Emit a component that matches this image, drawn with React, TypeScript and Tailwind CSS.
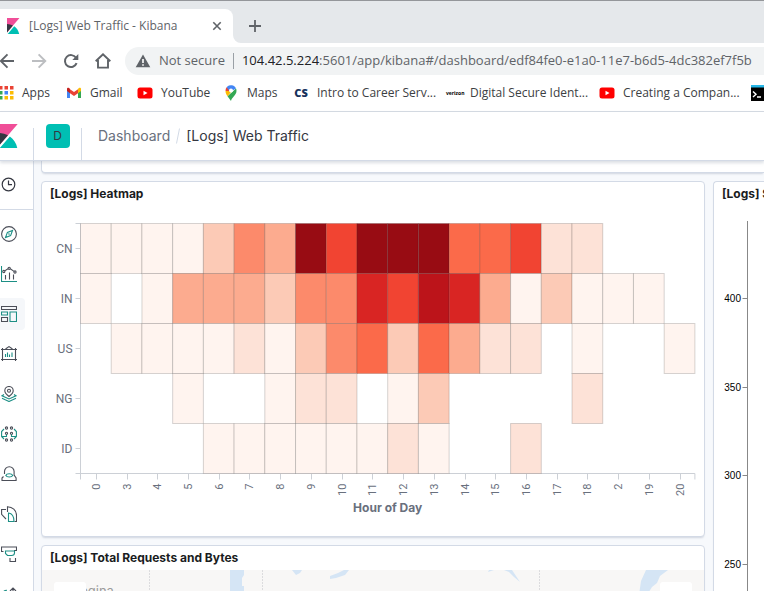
import type { ReactNode } from "react";

const HOURS = ["0", "3", "4", "5", "6", "7", "8", "9", "10", "11", "12", "13", "14", "15", "16", "17", "18", "2", "19", "20"];

// One intensity level per hour; 0 means there were no requests.
const ROWS: { country: string; levels: number[] }[] = [
  { country: "CN", levels: [1, 1, 1, 1, 3, 5, 4, 10, 7, 10, 10, 10, 6, 6, 7, 2, 2, 0, 0, 0] },
  { country: "IN", levels: [1, 0, 1, 4, 4, 4, 3, 5, 5, 8, 7, 9, 8, 4, 1, 3, 1, 1, 1, 0] },
  { country: "US", levels: [0, 1, 1, 1, 1, 2, 1, 3, 5, 6, 3, 6, 4, 2, 2, 0, 1, 0, 0, 1] },
  { country: "NG", levels: [0, 0, 0, 1, 0, 0, 1, 2, 2, 0, 1, 3, 0, 0, 0, 0, 2, 0, 0, 0] },
  { country: "ID", levels: [0, 0, 0, 0, 1, 1, 1, 1, 1, 1, 2, 1, 0, 0, 2, 0, 0, 0, 0, 0] },
];

const REDS = ["none", "#fff4ef", "#fde2d7", "#fccab6", "#fcab8f", "#fc8a6b", "#fb6a4a", "#f14432", "#d92523", "#bc141a", "#980c13"];

function KibanaLogo({ className }: { className: string }) {
  return (
    <svg viewBox="0 0 32 32" className={className} aria-hidden="true">
      <path fill="#F04E98" d="M4 0v28.789L28.935.017z" />
      <path fill="#343741" d="M4 12v16.789l11.906-13.738A24.721 24.721 0 0 0 4 12" />
      <path fill="#00BFB3" d="M18.479 16.664L6.268 30.754l-1.073 1.237h23.191c-1.252-6.292-4.883-11.719-9.907-15.327" />
    </svg>
  );
}

function YouTubeIcon() {
  return (
    <svg viewBox="0 0 16 16" className="size-4 shrink-0" aria-hidden="true">
      <rect x="0.5" y="2.5" width="15" height="11" rx="2.5" fill="#f00" />
      <path d="M6.5 5.7v4.6l4-2.3z" fill="#fff" />
    </svg>
  );
}

function TabStrip() {
  return (
    <div className="flex h-[43px] shrink-0 items-end border-t border-[#94969a] bg-[#e5e8eb]">
      <div className="flex h-[34px] w-[233px] items-center rounded-tr-lg bg-white pr-[10px] pl-[5px] text-xs text-[#5f6368]">
        <KibanaLogo className="size-4 shrink-0" />
        <span className="ml-2 flex-1 whitespace-nowrap">[Logs] Web Traffic - Kibana</span>
        <button aria-label="Close tab" className="flex size-3 items-center justify-center">
          <svg viewBox="0 0 12 12" className="size-3">
            <path d="M2.3 2.3l7.4 7.4M9.7 2.3L2.3 9.7" stroke="#5f6368" strokeWidth="1.6" />
          </svg>
        </button>
      </div>
      <svg viewBox="0 0 8 8" className="size-2" aria-hidden="true">
        <path d="M0 0a8 8 0 0 0 8 8H0z" fill="#fff" />
      </svg>
      <button aria-label="New tab" className="flex h-[34px] w-7 items-center justify-center">
        <svg viewBox="0 0 12 12" className="size-3">
          <path d="M6 0v12M0 6h12" stroke="#5f6368" strokeWidth="1.8" />
        </svg>
      </button>
    </div>
  );
}

function Toolbar() {
  return (
    <div className="flex h-9 shrink-0 items-center overflow-hidden bg-white">
      <div className="-ml-px flex shrink-0 gap-4 pr-[14px]">
        <button aria-label="Back">
          <svg viewBox="0 0 16 16" className="size-4" fill="none" stroke="#5f6368" strokeWidth="1.9">
            <path d="M15 8H2M8.5 1.3L1.8 8l6.7 6.7" />
          </svg>
        </button>
        <button aria-label="Forward">
          <svg viewBox="0 0 16 16" className="size-4" fill="none" stroke="#bcbec1" strokeWidth="1.9">
            <path d="M1 8h13M7.6 1.3L14.3 8l-6.7 6.7" />
          </svg>
        </button>
        <button aria-label="Reload">
          <svg viewBox="0 0 16 16" className="size-4">
            <path d="M13.6 10.2a6 6 0 1 1-.6-5.4" fill="none" stroke="#5f6368" strokeWidth="2" />
            <path d="M15.3 1v6H9.3z" fill="#5f6368" />
          </svg>
        </button>
        <button aria-label="Home">
          <svg viewBox="0 0 16 16" className="size-4" fill="none" stroke="#5f6368" strokeWidth="1.9">
            <path d="M.7 8.3L8 1.3l7.3 7M3 7v7.600h10V7" />
          </svg>
        </button>
      </div>
      <div className="flex h-7 min-w-0 flex-1 items-center overflow-hidden rounded-l-full bg-[#f1f3f4] pl-[10px] text-[13px] whitespace-nowrap text-[#5f6368]">
        <svg viewBox="0 0 16 14" className="mr-2 h-[14px] w-4 shrink-0" aria-hidden="true">
          <path d="M8 0.5L15.3 13.3H0.7z" fill="#5f6368" />
          <path d="M8 5v4M8 10.2v1.6" stroke="#fff" strokeWidth="1.6" />
        </svg>
        <span>Not secure</span>
        <span className="mx-2 h-4 w-px shrink-0 bg-[#9aa0a6]" />
        <span>
          <span className="text-[#202124]">104.42.5.224</span>
          :5601/app/kibana#/dashboard/edf84fe0-e1a0-11e7-b6d5-4dc382ef7f5b
        </span>
      </div>
    </div>
  );
}

function Bookmark({ icon, label, className }: { icon: ReactNode; label: string; className: string }) {
  return (
    <a href="#" className={`flex shrink-0 items-center gap-2 whitespace-nowrap ${className}`}>
      {icon}
      <span>{label}</span>
    </a>
  );
}

function Bookmarks() {
  const dots = ["#ea4335", "#ea4335", "#ea4335", "#34a853", "#4285f4", "#fbbc04", "#34a853", "#fbbc04", "#fbbc04"];
  return (
    <nav aria-label="Bookmarks" className="flex h-[33px] shrink-0 items-center overflow-hidden border-b border-[#d5dae2] bg-white pb-1 text-xs text-[#3c4043]">
      <Bookmark
        className="w-[66px]"
        label="Apps"
        icon={
          <svg viewBox="2 0 14 16" className="h-4 w-[14px] shrink-0" aria-hidden="true">
            {dots.map((c, i) => (
              <rect key={i} x={1 + (i % 3) * 5.5} y={1 + Math.floor(i / 3) * 5} width="3.5" height="3.5" fill={c} />
            ))}
          </svg>
        }
      />
      <Bookmark
        className="w-[71px]"
        label="Gmail"
        icon={
          <svg viewBox="0 0 16 16" className="size-4 shrink-0" aria-hidden="true">
            <path d="M1 4v9h3V6.5z" fill="#4285f4" />
            <path d="M15 4v9h-3V6.5z" fill="#34a853" />
            <path d="M12 4.3v4L15 6V4.3A1.4 1.4 0 0 0 12.7 3z" fill="#fbbc04" />
            <path d="M4 4.2v4L8 11l4-2.8v-4L8 7z" fill="#ea4335" />
            <path d="M1 4.3V6l3 2.3v-4L3.3 3A1.4 1.4 0 0 0 1 4.3z" fill="#c5221f" />
          </svg>
        }
      />
      <Bookmark className="w-[86px]" label="YouTube" icon={<YouTubeIcon />} />
      <Bookmark
        className="w-[70px]"
        label="Maps"
        icon={
          <svg viewBox="0 0 16 16" className="size-4 shrink-0" aria-hidden="true">
            <path d="M8 16c.5-3.500 5.500-5.500 5.500-10.200A5.500 5.500 0 0 0 13 3.500L4.500 11.200z" fill="#34a853" />
            <path d="M2.500 6c0 2 .8 3.500 2 5.200L9 6z" fill="#fbbc04" />
            <path d="M3.700 2.200A5.500 5.500 0 0 0 2.500 6L7 6 8 3z" fill="#ea4335" />
            <path d="M3.700 2.200A5.500 5.500 0 0 1 13 3.500L7 7z" fill="#4285f4" />
            <circle cx="8" cy="5.600" r="2" fill="#fff" />
          </svg>
        }
      />
      <Bookmark
        className="w-[153px]"
        label="Intro to Career Serv..."
        icon={<span className="w-4 shrink-0 text-center text-[11px] font-extrabold text-[#16325c]">CS</span>}
      />
      <Bookmark
        className="w-[153px]"
        label="Digital Secure Ident..."
        icon={<span className="w-4 shrink-0 text-center text-[5px] font-bold text-black">verizon</span>}
      />
      <Bookmark className="w-[152px]" label="Creating a Compan..." icon={<YouTubeIcon />} />
      <a href="#" aria-label="Terminal" className="shrink-0">
        <svg viewBox="0 0 16 16" className="size-4">
          <rect width="16" height="16" fill="#000" />
          <rect width="16" height="2.500" fill="#27b7e8" />
          <path d="M2 6.500l3 2.800-3 2.800M6 12h4" fill="none" stroke="#fff" strokeWidth="1.400" />
        </svg>
      </a>
    </nav>
  );
}

function Header() {
  return (
    <header className="z-10 flex h-[49px] shrink-0 items-center border-b border-[#d3dae6] bg-white shadow-[0_2px_3px_rgba(152,162,179,0.35)]">
      <div className="flex w-[33px] shrink-0 overflow-hidden">
        <KibanaLogo className="-ml-1 size-6 shrink-0" />
      </div>
      <div className="flex h-8 w-[49px] shrink-0 justify-center self-end border-x border-[#d3dae6]">
        <button aria-label="Space: Default" className="-mt-1 flex size-6 items-center justify-center rounded bg-[#00bfb3] text-xs text-[#343741]">
          D
        </button>
      </div>
      <nav aria-label="Breadcrumbs" className="flex items-center gap-1.5 pl-4 text-sm whitespace-nowrap">
        <a href="#" className="text-[#69707d]">Dashboard</a>
        <svg viewBox="0 0 4 16" className="h-4 w-1" aria-hidden="true">
          <path d="M3.500 0.500L0.500 15.500" stroke="#d3dae6" />
        </svg>
        <span className="text-[#343741]">[Logs] Web Traffic</span>
      </nav>
    </header>
  );
}

const NAV_ICONS: { label: string; dark: ReactNode; teal: ReactNode; active?: boolean }[] = [
  {
    label: "Discover",
    dark: <circle cx="8" cy="8" r="7.400" />,
    teal: <path d="M11.500 4.500L9.600 9.600 4.500 11.500 6.400 6.400zM7.500 7.500l1 1" />,
  },
  {
    label: "Visualize",
    dark: (
      <>
        <path d="M4.500 9v4.500M8.500 6.500v7M12.500 8.500v5M3.700 4.900L7 2.800M9.300 2.800l3.700 2.600" />
        <circle cx="2.800" cy="5.500" r="1.100" />
        <circle cx="8.200" cy="2.300" r="1.100" />
        <circle cx="14" cy="6" r="1.100" />
      </>
    ),
    teal: <path d="M.5 0v15.500H16" />,
  },
  {
    label: "Dashboard",
    active: true,
    dark: <path d="M.5.500h15v3H.5zM.5 11.500h6v4H.500z" />,
    teal: <path d="M.500 6h6v3h-6zM9 6h6.500v9.500H9z" />,
  },
  {
    label: "Canvas",
    dark: <path d="M2 3.500h12M2 13.500h12M1.500 2v13M14.500 2v13M4.500 3L8 .600 11.500 3M0 3.500h2M14 3.500h2M0 13.500h2M14 13.500h2" />,
    teal: <path d="M4.500 8v3M6.500 6.500V11M8.500 8.500V11M11 6.500V11" />,
  },
  {
    label: "Maps",
    dark: (
      <>
        <path d="M8 10.500C5.500 8.500 3.800 7 3.800 4.700a4.200 4.200 0 0 1 8.400 0C12.200 7 10.500 8.500 8 10.500z" />
        <circle cx="8" cy="4.700" r="1.500" />
      </>
    ),
    teal: <path d="M3 8.500L1 9.800l7 3.200 7-3.200-2-1.300M1 12.300l7 3.200 7-3.200" />,
  },
  {
    label: "Machine Learning",
    dark: (
      <>
        <circle cx="5.500" cy="2" r="1.100" />
        <circle cx="10.500" cy="2" r="1.100" />
        <circle cx="5.500" cy="7.300" r="1.100" />
        <circle cx="10.500" cy="7.300" r="1.100" />
        <circle cx="5.500" cy="14" r="1.100" />
        <circle cx="10.500" cy="14" r="1.100" />
      </>
    ),
    teal: <path d="M3 3L.6 5.500v5L3 13M13 3l2.400 2.500v5L13 13M.6 10.500h4.900V8.500M15.400 10.500h-4.900V8.500" />,
  },
  {
    label: "Metrics",
    dark: <path d="M3.500 8V5.500a4.800 4.800 0 0 1 9.600 0V9l2 3v2.500H1V12l1.500-1.500" />,
    teal: <path d="M4.800 9.500c1-2.400 5.800-2.400 7 0-1.200 1.900-5.800 1.900-7 0z" />,
  },
  {
    label: "Logs",
    dark: <path d="M6.500 6V.700c5 .3 8.800 3.500 9 8.300v6.500h-2M5 3.500H.6v4.800L5 13" />,
    teal: <path d="M7.500 7c4 .5 5.500 3.500 5.500 8.500H7.500z" />,
  },
  {
    label: "APM",
    dark: <path d="M2.500 5.500H.500V1h15v3.500H13M9 12v3.500h5.500V12" />,
    teal: <path d="M4.500 5h9v2c0 1.800-1 2.500-3 2.500H6.500L4.500 7.500z" />,
  },
  {
    label: "Uptime",
    dark: <path d="M12 15V2M9 5l3-3 3 3" />,
    teal: <path d="M2 8c0-2.500 2-3.800 4-3.800" />,
  },
];

function Sidebar() {
  return (
    <nav aria-label="Main" className="w-[34px] shrink-0 overflow-hidden border-r border-[#d3dae6] bg-white shadow-[1px_0_3px_rgba(152,162,179,0.35)]">
      <div className="flex h-[49px] items-center border-b border-[#d3dae6]">
        <button aria-label="Recently viewed" className="pl-px">
          <svg viewBox="0 0 16 16" className="size-4" fill="none" stroke="#343741" strokeWidth="1.200">
            <circle cx="7.500" cy="7.500" r="6.300" />
            <path d="M7.500 3.500v4.200h3.500" />
          </svg>
        </button>
      </div>
      <ul className="flex flex-col gap-2 pt-2">
        {NAV_ICONS.map(({ label, dark, teal, active }) => (
          <li key={label}>
            <button aria-label={label} className={`flex h-8 w-[25px] items-center pl-px ${active ? "rounded-r bg-[#f5f7fa]" : ""}`}>
              <svg viewBox="0 0 16 16" className="size-4" fill="none" strokeWidth="1.100">
                <g stroke="#4b4e58">{dark}</g>
                <g stroke="#1c8f85">{teal}</g>
              </svg>
            </button>
          </li>
        ))}
      </ul>
    </nav>
  );
}

function Heatmap() {
  const left = 38.5;
  const top = 17.5;
  const cw = 30.72;
  const ch = 50;
  const bottom = top + ch * ROWS.length;
  const right = left + cw * HOURS.length;
  return (
    <svg viewBox="0 0 662 330" className="block w-full font-[Inter,sans-serif] text-xs" role="img" aria-label="Requests by country and hour of day">
      <g stroke="#ccd0d6" fill="none">
        <path d={`M${left - 5} ${top}H${left}V${bottom}M${left - 5} ${bottom}H${right}M${left} ${bottom}v6M${right} ${bottom}v6`} />
        {ROWS.map((r, i) => (
          <path key={r.country} d={`M${left - 5} ${top + ch * (i + 0.5)}h5`} />
        ))}
        {HOURS.map((h, i) => (
          <path key={h} d={`M${Math.round(left + cw * (i + 0.5)) + 0.5} ${bottom}v6`} />
        ))}
      </g>
      {ROWS.map((r, y) =>
        r.levels.map((level, x) =>
          level ? (
            <rect key={`${r.country}-${HOURS[x]}`} x={left + cw * x} y={top + ch * y} width={cw} height={ch} fill={REDS[level]} stroke="#333" strokeOpacity="0.2" />
          ) : null,
        ),
      )}
      <g fill="#69707d" fontSize="12">
        <g fontFamily="Roboto, sans-serif">
          {ROWS.map((r, i) => (
            <text key={r.country} x={left - 8} y={top + ch * (i + 0.5) + 4} textAnchor="end">
              {r.country}
            </text>
          ))}
          {HOURS.map((h, i) => {
            const x = left + cw * (i + 0.5) + 4;
            return (
              <text key={h} x={x} y={bottom + 10} textAnchor="end" fontSize="11" transform={`rotate(-90 ${x} ${bottom + 10})`}>
                {h}
              </text>
            );
          })}
        </g>
        <text x={(left + right) / 2} y="306" textAnchor="middle" fontWeight="700">
          Hour of Day
        </text>
      </g>
    </svg>
  );
}

function ScatterAxis() {
  return (
    <svg className="block h-[400px] w-[50px]" role="img" aria-label="Vertical axis">
      <path d="M33.500 15v385" stroke="#888" />
      {[400, 350, 300, 250].map((v, i) => (
        <g key={v}>
          <path d={`M28.500 ${92.5 + Math.round(i * 88.7)}h5`} stroke="#888" />
          <text x="27" y={96 + Math.round(i * 88.7)} textAnchor="end" fontSize="10" fontFamily="Liberation Sans, sans-serif">
            {v}
          </text>
        </g>
      ))}
    </svg>
  );
}

function MapPreview() {
  return (
    <svg viewBox="0 0 662 40" className="block w-full" role="img" aria-label="Map of requests">
      <rect width="662" height="40" fill="#f8f7f6" />
      <g stroke="#dcdcde" strokeDasharray="2 1">
        <path d="M107.500 0v40M220.500 0v40M497.500 0v40" />
      </g>
      <g fill="#d5e5f5">
        <path d="M188 0h14v5l-2 3v8h2v6l-7 18h-7zM250 0h10l-2 3-4 2zM288 6l8-3 6-3h5l-4 5-9 3-6 1zM446 2l6-2h-5zM462 0h8l8 12-6-5-5-5zM604 0h22l-8 6-3 7-5 4-5 8h-8l2-14z" />
      </g>
      <text x="30" y="26" fontSize="13" fontFamily="Inter, sans-serif" fill="#9b9b9b">
        Regina
      </text>
      <rect x="12" y="12" width="32" height="32" rx="3" fill="#fff" />
      <rect x="618" y="12" width="32" height="32" rx="3" fill="#fff" />
    </svg>
  );
}

function Panel({ title, className, children }: { title: string; className: string; children: ReactNode }) {
  return (
    <section className={`shrink-0 overflow-hidden border border-[#d3dae6] bg-white shadow-[0_2px_2px_-1px_rgba(152,162,179,0.4)] ${className}`}>
      <h2 className="h-6 overflow-hidden pl-2 text-xs leading-6 font-bold whitespace-nowrap text-[#1a1c21]">{title}</h2>
      {children}
    </section>
  );
}

export default function App() {
  return (
    <div className="flex h-screen flex-col overflow-hidden bg-white font-['Open_Sans',sans-serif]">
      <TabStrip />
      <Toolbar />
      <Bookmarks />
      <div className="flex min-h-0 flex-1 flex-col font-[Inter,sans-serif]">
        <Header />
        <div className="flex min-h-0 flex-1">
          <Sidebar />
          <main className="flex min-w-0 flex-1 flex-col gap-2 overflow-hidden bg-[#f7f9fc] pl-[7px]">
            <div className="h-3 shrink-0 rounded-bl border-b border-l border-[#d3dae6] bg-white shadow-[0_2px_2px_-1px_rgba(152,162,179,0.4)]" />
            <div className="flex shrink-0 gap-2">
              <div className="flex min-w-0 flex-1 flex-col gap-2">
                <Panel title="[Logs] Heatmap" className="rounded">
                  <Heatmap />
                </Panel>
                <Panel title="[Logs] Total Requests and Bytes" className="rounded">
                  <MapPreview />
                </Panel>
              </div>
              <Panel title="[Logs] S" className="w-[51px] rounded-l border-r-0">
                <ScatterAxis />
              </Panel>
            </div>
          </main>
        </div>
      </div>
    </div>
  );
}
